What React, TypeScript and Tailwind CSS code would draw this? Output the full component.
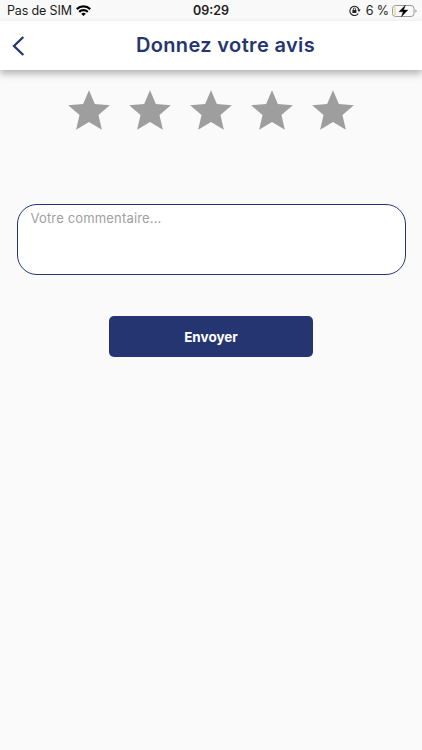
import React from "react";

const ratings: number[] = [1, 2, 3, 4, 5];

/**
 * Phone status bar: carrier, clock and battery.
 */
const StatusBar: React.FC = () => {
  return (
    <div className="grid h-[21px] grid-cols-3 items-center bg-[#f9f9f9] text-[12.5px] leading-5 text-[#1c1c1c]">
      <div className="flex items-center gap-1 pl-[7px]">
        <span className="whitespace-nowrap pt-px tracking-[-0.14px]">Pas de SIM</span>
        <svg className="h-[11px] w-[15px]" viewBox="0 0 15 11" fill="none" stroke="#000" strokeWidth={2.2}>
          <path d="M0.8 4.1a9.5 9.5 0 0 1 13.4 0" />
          <path d="M3.2 6.9a6.1 6.1 0 0 1 8.6 0" />
          <path d="M7.5 11L5.2 8.8a3.3 3.3 0 0 1 4.6 0z" fill="#000" stroke="none" />
        </svg>
      </div>
      <span className="pt-px text-center text-[12.5px] font-semibold">09:29</span>
      <div className="flex items-center justify-end pr-[5px]">
        <svg className="mr-[5px] h-[11px] w-[12px]" viewBox="0 0 12 11" fill="none" stroke="#222">
          <path d="M9.3 8.5A4.6 4.6 0 1 1 10 5" strokeWidth={1.1} />
          <path d="M8.3 4.6h3.4L10 7z" fill="#222" stroke="none" />
          <rect x="3.4" y="5" width="4" height="3" fill="#222" stroke="none" />
          <path d="M4.3 5V4a1.1 1.1 0 0 1 2.2 0v1" strokeWidth={0.8} />
        </svg>
        <span className="mr-[3px] whitespace-nowrap pt-px text-[12.5px] tracking-[-0.1px]">6 %</span>
        <svg className="h-3 w-[25px]" viewBox="0 0 25 12" fill="none">
          <rect x="0.5" y="0.5" width="21.5" height="11" rx="3" stroke="#999" />
          <path d="M3.7 2v8H3a1 1 0 0 1-1-1V3a1 1 0 0 1 1-1z" fill="#f3df91" />
          <path d="M23.4 4.2c1.6.6 1.6 3 0 3.6z" fill="#999" />
          <path d="M13.4 0.2L7 6.7h4.2l-1.8 5 6.4-6.6h-4.2z" fill="#000" stroke="#000" strokeWidth={0.4} />
        </svg>
      </div>
    </div>
  );
};

/**
 * Review screen with a star rating, a comment field and a send button.
 */
const App: React.FC = () => {
  return (
    <div className="flex min-h-screen flex-col bg-[#fafafa] font-['Inter',sans-serif]">
      <StatusBar />

      {/* Header */}
      <header className="grid h-[49px] grid-cols-[40px_1fr_11px] items-center bg-white shadow-[0_4px_7px_rgba(0,0,0,0.28)]">
        <button aria-label="Retour" className="flex pl-3">
          <svg className="h-5 w-[13px]" viewBox="0 0 13 20" fill="none" stroke="#253571" strokeWidth={2.3}>
            <path d="M11.3 1L2 10l9.3 9" />
          </svg>
        </button>
        <h1 className="whitespace-nowrap pb-px text-center text-[20px] font-semibold leading-6 tracking-[0.36px] text-[#253571]">
          Donnez votre avis
        </h1>
      </header>

      <main className="flex flex-col items-center px-4 pt-4">
        {/* Rating */}
        <div className="flex gap-[11px]">
          {ratings.map((rating) => (
            <button key={rating} aria-label={`${rating} / 5`}>
              <svg className="h-[50px] w-[50px]" viewBox="0 0 24 24" fill="#9e9e9e">
                <path d="M12 17.27L18.18 21l-1.64-7.03L22 9.24l-7.19-.61L12 2 9.19 8.63 2 9.24l5.46 4.73L5.82 21z" />
              </svg>
            </button>
          ))}
        </div>

        <textarea
          placeholder="Votre commentaire..."
          className="mt-[68px] h-[71px] w-[389px] resize-none rounded-[20px] border border-[#253571] bg-white px-[13px] py-[3px] text-[13px] leading-5 tracking-[0.16px] outline-none placeholder:text-[#a0a0a0]"
        />

        <button className="mt-[41px] h-[41px] w-[204px] rounded-[5px] bg-[#253571] pt-px text-[13.5px] font-bold text-white">
          Envoyer
        </button>
      </main>
    </div>
  );
};

export default App;
